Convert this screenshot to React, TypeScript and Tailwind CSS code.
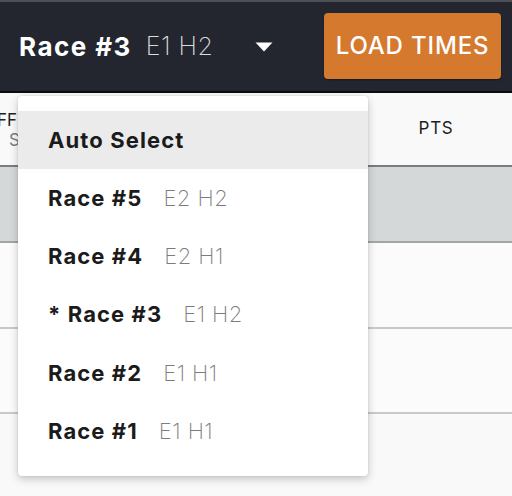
import React from 'react';

const races = [
  { label: 'Race #5', sub: 'E2 H2' },
  { label: 'Race #4', sub: 'E2 H1' },
  { label: '* Race #3', sub: 'E1 H2' },
  { label: 'Race #2', sub: 'E1 H1' },
  { label: 'Race #1', sub: 'E1 H1' },
];

export default function App() {
  return (
    <div className="relative w-[512px] h-[496px] overflow-hidden bg-[#f8f8f8] font-['Inter','Roboto',sans-serif]">
      {/* window top strip */}
      <div className="h-[2px] bg-[#4e5156]" />

      {/* Header */}
      <header className="h-[91px] bg-[#23262e] border-b-2 border-[#0c0d10] flex items-center justify-between pl-[19px] pr-[11px]">
        <div className="flex items-center">
          <span className="text-[26px] font-bold text-white tracking-[0.055em]">Race #3</span>
          <span className="ml-[14px] text-[25px] font-extralight text-[#dcdcde] tracking-[0.02em]">E1 H2</span>
          <svg className="ml-[42px]" width="18" height="10" viewBox="0 0 18 10">
            <path d="M0.5 0.5 L17.5 0.5 L9 9.5 Z" fill="#ffffff" />
          </svg>
        </div>
        <button className="w-[177px] h-[66px] mb-[1px] rounded-[4px] bg-[#d4792e] text-white text-[24px] font-medium tracking-[0.035em] shadow-[0_1px_2px_rgba(0,0,0,0.4)]">
          LOAD TIMES
        </button>
      </header>

      {/* Table behind the menu */}
      <div>
        <div className="h-[74px] bg-[#f9f9f9] border-b-2 border-[#7a7c7e] flex">
          <div className="w-[18px] overflow-hidden flex flex-col justify-center pt-[2px]">
            <span className="text-[17px] text-[#222] leading-[20px] -ml-[3px]">FF</span>
            <span className="text-[17px] text-[#7a7d85] leading-[20px] ml-[9px]">S</span>
          </div>
          <div className="flex-1" />
          <div className="w-[150px] flex items-center justify-center text-[17px] text-[#1e1e1e] tracking-[0.04em] pr-[2px]">
            PTS
          </div>
        </div>
        <div className="h-[76px] bg-[#d5d8d9] border-b-2 border-[#a2a5a7]" />
        <div className="h-[86px] bg-[#fbfbfb] border-b-2 border-[#c9c9c9]" />
        <div className="h-[85px] bg-[#fbfbfb] border-b-2 border-[#c9c9c9]" />
        <div className="h-[82px] bg-[#f9f9f9]" />
      </div>

      {/* Dropdown menu */}
      <div className="absolute left-[18px] top-[96px] w-[350px] rounded-[4px] bg-white py-[15px] shadow-[0_3px_8px_rgba(0,0,0,0.22),0_0_2px_rgba(0,0,0,0.12)]">
        <div className="h-[58px] bg-[#ebebeb] flex items-center pl-[30px]">
          <span className="text-[22px] font-bold text-[#1b1b1b] tracking-[0.05em]">Auto Select</span>
        </div>
        {races.map((r) => (
          <div key={r.label} className="h-[58.4px] flex items-center pl-[30px]">
            <span className="text-[22px] font-bold text-[#1b1b1b] tracking-[0.05em]">{r.label}</span>
            <span className="ml-[21px] text-[22px] font-extralight text-[#7c7c7c] tracking-[0.02em]">{r.sub}</span>
          </div>
        ))}
      </div>
    </div>
  );
}
